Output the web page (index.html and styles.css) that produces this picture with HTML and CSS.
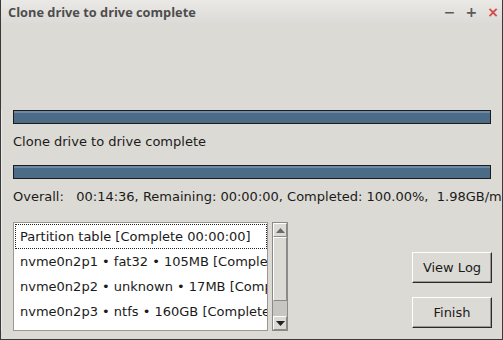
FILE: index.html
```html
<!DOCTYPE html>
<html lang="en">

<head>
    <meta charset="UTF-8" />
    <title>Clone drive to drive complete</title>
    <link rel="stylesheet" href="styles.css">
</head>

<body>
    <div class="window">
        <!-- Title Bar -->
        <div class="titlebar">
            <span class="title">Clone drive to drive complete</span>
            <div class="win-controls">
                <span class="ctl">&#8722;</span>
                <span class="ctl">+</span>
                <span class="ctl close">&#215;</span>
            </div>
        </div>

        <!-- Content -->
        <div class="content">
            <div class="progress first"><div class="fill"></div></div>
            <div class="label">Clone drive to drive complete</div>
            <div class="progress"><div class="fill"></div></div>
            <div class="label overall">Overall:   00:14:36, Remaining: 00:00:00, Completed: 100.00%,  1.98GB/min</div>

            <div class="bottom">
                <div class="listbox">
                    <div class="items">
                        <div class="item focus">Partition table [Complete 00:00:00]</div>
                        <div class="item">nvme0n2p1 • fat32 • 105MB [Complete 00:00:01]</div>
                        <div class="item">nvme0n2p2 • unknown • 17MB [Complete 00:00:00]</div>
                        <div class="item">nvme0n2p3 • ntfs • 160GB [Complete 00:14:35]</div>
                    </div>
                    <div class="scrollbar">
                        <div class="arrow up">
                            <svg width="9" height="5" viewBox="0 0 9 5"><path d="M0 5 L4.5 0 L9 5 Z" fill="#6a6a6a"/></svg>
                        </div>
                        <div class="thumb"></div>
                        <div class="trough"></div>
                        <div class="arrow down">
                            <svg width="9" height="5" viewBox="0 0 9 5"><path d="M0 0 L4.5 5 L9 0 Z" fill="#222"/></svg>
                        </div>
                    </div>
                </div>

                <div class="buttons">
                    <button class="btn">View Log</button>
                    <button class="btn">Finish</button>
                </div>
            </div>
        </div>
    </div>
</body>

</html>
```

FILE: styles.css
```css
/* === Base === */
* {
    margin: 0;
    padding: 0;
    box-sizing: border-box;
}

body {
    font-family: 'DejaVu Sans', sans-serif;
    font-size: 13px;
    color: #1a1a1a;
    background-color: #2b2b2b;
}

.window {
    width: 503px;
    height: 340px;
    background-color: #dcdad5;
    border: 1px solid #3a3a3a;
    border-top: none;
    overflow: hidden;
}

/* === Title Bar === */
.titlebar {
    height: 23px;
    display: flex;
    align-items: center;
    justify-content: space-between;
    padding: 0 3px 0 7px;
    background: linear-gradient(#ebe9e6, #dddbd7);
}

.title {
    font-family: 'Open Sans', sans-serif;
    font-weight: bold;
    font-size: 12.8px;
    color: #4d4d4d;
}

.win-controls {
    display: flex;
    gap: 10px;
    font-family: 'DejaVu Sans', sans-serif;
    font-weight: bold;
    font-size: 14px;
    color: #5a5a5a;
}

.ctl.close {
    color: #d24a4a;
}

/* === Content === */
.content {
    padding: 0 10px 0 11px;
    border-left: 1px solid #ecebe8;
}

.progress {
    height: 14px;
    border: 1px solid #1c1c1c;
    background-color: #4c6b87;
    margin-right: 1px;
}

.progress.first {
    margin-top: 87px;
}

.progress .fill {
    height: 100%;
    border-top: 2px solid #6b8aa5;
}

.label {
    height: 41px;
    line-height: 36px;
    white-space: pre;
}

.overall {
    height: 43px;
}

/* === Bottom (List + Buttons) === */
.bottom {
    display: flex;
    justify-content: space-between;
}

.listbox {
    display: flex;
    gap: 4px;
}

.items {
    width: 255px;
    height: 109px;
    background-color: #ffffff;
    border: 1px solid #9a9893;
    padding: 1px 0 0 1px;
    overflow: hidden;
}

.item {
    height: 25px;
    line-height: 23px;
    padding-left: 4px;
    white-space: nowrap;
    border: 1px solid transparent;
}

.item.focus {
    border: 1px dotted #222;
}

.scrollbar {
    width: 16px;
    height: 109px;
    display: flex;
    flex-direction: column;
    border: 1px solid #8c8a86;
    background-color: #c8c6c1;
}

.arrow {
    height: 14px;
    display: flex;
    align-items: center;
    justify-content: center;
    background-color: #dcdad5;
    border: 1px solid;
    border-color: #ffffff #8c8a86 #8c8a86 #ffffff;
}

.thumb {
    height: 64px;
    background-color: #dcdad5;
    border: 1px solid;
    border-color: #ffffff #8c8a86 #8c8a86 #ffffff;
}

.trough {
    flex: 1;
}

.buttons {
    display: flex;
    flex-direction: column;
    gap: 14px;
    padding-top: 30px;
}

.btn {
    width: 80px;
    height: 31px;
    font-family: 'DejaVu Sans', sans-serif;
    font-size: 13px;
    color: #1a1a1a;
    background-color: #dcdad5;
    border: 1px solid;
    border-color: #ffffff #2a2a2a #2a2a2a #ffffff;
    box-shadow: inset -1px -1px 0 #9a9893;
}
```
